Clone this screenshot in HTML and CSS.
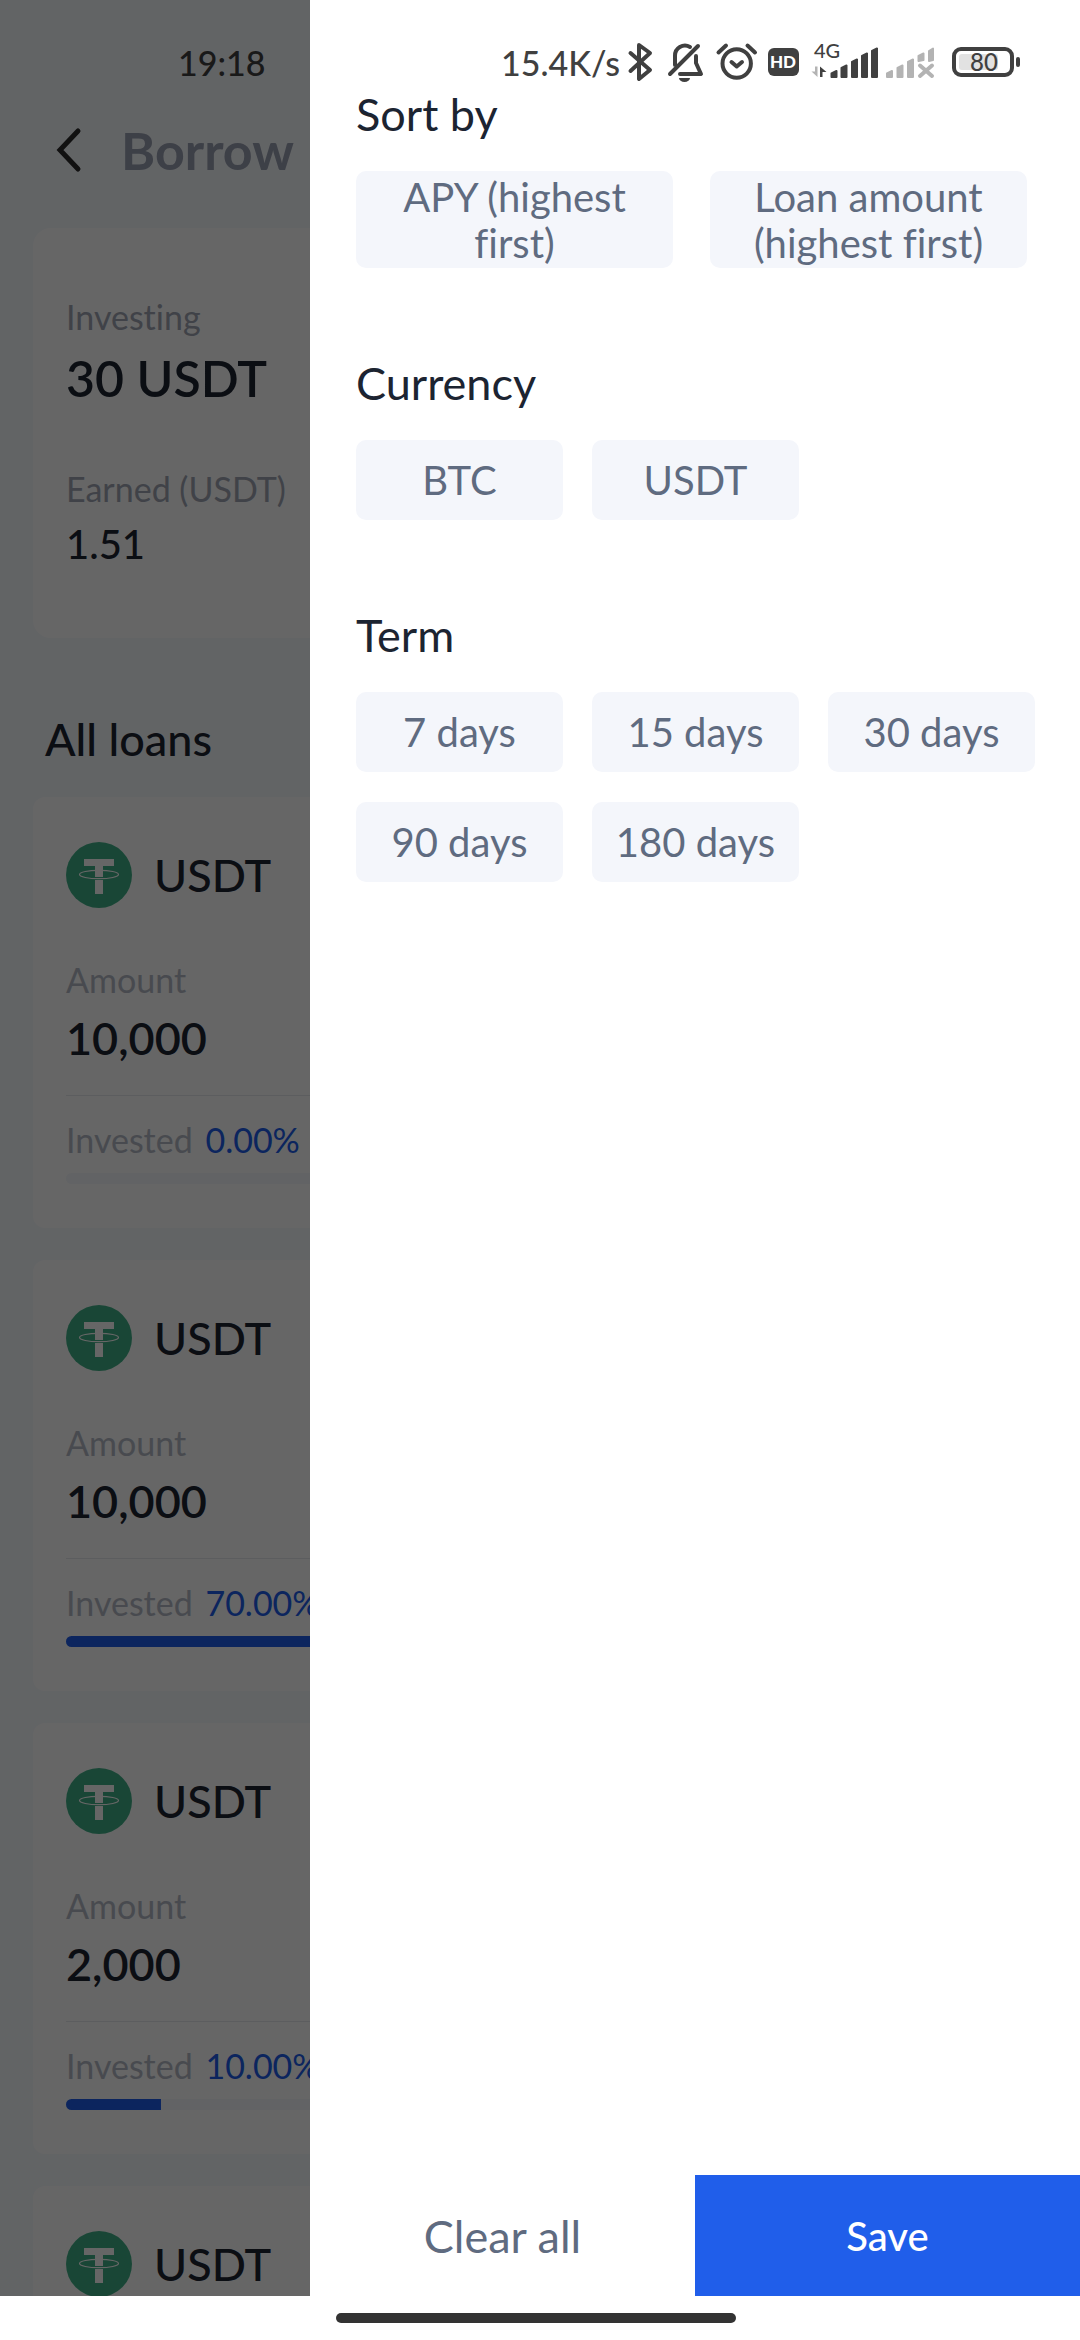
FILE: index.html
```
<!DOCTYPE html>
<html lang="en">
  <head>
    <meta charset="UTF-8" />
    <meta name="viewport" content="width=device-width, initial-scale=1.0" />
    <title>Borrow</title>
    <link rel="stylesheet" href="styles.css">
  </head>

  <body>
    <!-- shared coin logo -->
    <svg class="sprite" aria-hidden="true">
      <symbol id="tether" viewBox="0 0 66 66">
        <circle cx="33" cy="33" r="33" fill="#40b088" />
        <path d="M18 17h30v7H37v28h-8V24H18z" fill="#fff" />
        <path d="M29 36.5h8" stroke="#40b088" stroke-width="3" />
        <ellipse cx="33" cy="32.5" rx="19.5" ry="4.2" fill="none" stroke="#fff" stroke-width="1.2" />
      </symbol>
    </svg>

    <div class="app">
      <main class="page">
        <div class="status-bar status-left">19:18</div>
        <header class="header">
          <button class="back-btn" aria-label="Back">
            <svg width="26" height="44" viewBox="0 0 26 44">
              <path d="M23 3 5 22l18 19" />
            </svg>
          </button>
          <h1>Borrow</h1>
        </header>

        <section class="card summary">
          <div class="label">Investing</div>
          <div class="total">30 USDT</div>
          <div class="label earned-label">Earned (USDT)</div>
          <div class="earned">1.51</div>
        </section>

        <h2 class="list-title">All loans</h2>

        <section class="loans">
          <article class="card loan">
            <div class="coin"><svg class="coin-icon"><use href="#tether" /></svg>USDT</div>
            <div class="label light">Amount</div>
            <div class="amount">10,000</div>
            <div class="invested label light">Invested <span class="percent">0.00%</span></div>
            <div class="track"><div class="fill" style="width: 0%"></div></div>
          </article>
          <article class="card loan">
            <div class="coin"><svg class="coin-icon"><use href="#tether" /></svg>USDT</div>
            <div class="label light">Amount</div>
            <div class="amount">10,000</div>
            <div class="invested label light">Invested <span class="percent">70.00%</span></div>
            <div class="track"><div class="fill" style="width: 70%"></div></div>
          </article>
          <article class="card loan">
            <div class="coin"><svg class="coin-icon"><use href="#tether" /></svg>USDT</div>
            <div class="label light">Amount</div>
            <div class="amount">2,000</div>
            <div class="invested label light">Invested <span class="percent">10.00%</span></div>
            <div class="track"><div class="fill" style="width: 10%"></div></div>
          </article>
          <article class="card loan">
            <div class="coin"><svg class="coin-icon"><use href="#tether" /></svg>USDT</div>
          </article>
        </section>
      </main>

      <div class="overlay"></div>

      <aside class="drawer">
        <div class="status-bar status-right">
          <span>15.4K/s</span>
          <!-- bluetooth -->
          <svg width="32" height="40" viewBox="0 0 32 40">
            <path class="line" d="M2.5 11 22 28l-11 9V3l11 8L2.5 29" />
          </svg>
          <!-- muted bell -->
          <svg width="41" height="40" viewBox="0 0 41 40">
            <path class="line" d="M7 23v-9A10 10 0 0 1 22 5M2 32 30 4M28 14v7l5 11H12" />
            <path d="M11 36h11a5.5 4 0 0 1-11 0z" fill="#404040" />
          </svg>
          <!-- alarm -->
          <svg width="43" height="40" viewBox="0 0 43 40">
            <circle class="line" cx="19.7" cy="21.5" r="14.2" />
            <path class="line" d="M1.5 10.5 9 3.5M30.5 3.5l7.500 7M14.5 20l5.2 4.5L25 20" />
          </svg>
          <!-- HD -->
          <svg width="35" height="40" viewBox="0 0 35 40">
            <rect y="6" width="31" height="28" rx="6" fill="#404040" />
            <text class="hd" x="15" y="26" text-anchor="middle">HD</text>
          </svg>
          <!-- first sim -->
          <svg width="67" height="40" viewBox="0 0 67 40">
            <text class="net" x="3" y="16">4G</text>
            <path d="M4 24.5h2.5v10.5L.5 29.5H4z" fill="#b3b3b3" />
            <path d="M9 35V24.5l6.5 5.5h-4v5z" fill="#404040" />
            <path class="bars" d="M20.5 31.5l5-2.5v6h-5zM30.5 26l5-2.5V35h-5zM41 20l5-2.5V35h-5zM51 14l5-2.5V35h-5zM61 9l5-2.5V35h-5z" />
          </svg>
          <!-- second sim, no signal -->
          <svg width="58" height="40" viewBox="0 0 58 40">
            <path class="bars off" d="M1 31.5l5-2.5v6H1zM11.5 26l5-2.5V35h-5zM22 20l5-2.5V35h-5zM32.5 14l5-2.5V18l-5 1zM43 9l4-2.5V18l-4 1z" />
            <path class="cross" d="M34 23.5 46 34M46 23.5 34 34" />
          </svg>
          <!-- battery -->
          <svg width="68" height="40" viewBox="0 0 68 40">
            <rect x="2" y="7" width="58" height="26" rx="7" fill="none" stroke="#404040" stroke-width="4" />
            <rect x="7" y="12" width="39" height="16" rx="3" fill="#e2e2e2" />
            <rect x="64" y="15" width="4" height="10" rx="2" fill="#404040" />
            <text class="charge" x="32" y="29" text-anchor="middle">80</text>
          </svg>
        </div>

        <div class="filters">
          <h3>Sort by</h3>
          <div class="chips sort">
            <button class="chip">APY (highest first)</button>
            <button class="chip">Loan amount (highest first)</button>
          </div>

          <h3>Currency</h3>
          <div class="chips">
            <button class="chip">BTC</button>
            <button class="chip">USDT</button>
          </div>

          <h3>Term</h3>
          <div class="chips">
            <button class="chip">7 days</button>
            <button class="chip">15 days</button>
            <button class="chip">30 days</button>
            <button class="chip">90 days</button>
            <button class="chip">180 days</button>
          </div>
        </div>

        <div class="actions">
          <button class="clear-btn">Clear all</button>
          <button class="save-btn">Save</button>
        </div>
      </aside>
    </div>

    <div class="nav-bar"><div class="nav-handle"></div></div>
  </body>
</html>
```
FILE: styles.css
```
/* Basic reset */
* {
  margin: 0;
  padding: 0;
  box-sizing: border-box;
}

body {
  font-family: "Lato", sans-serif;
  font-variant-ligatures: none;
  background-color: #fff;
  color: #1c2431;
  height: 100vh;
  display: flex;
  flex-direction: column;
  overflow: hidden;
}

h1,
h2,
h3 {
  font-weight: 400;
}

button {
  font-family: inherit;
  font-variant-ligatures: none;
  border: none;
  background: none;
  cursor: pointer;
}

svg {
  flex-shrink: 0;
  overflow: visible;
}

.sprite {
  position: absolute;
  width: 0;
  height: 0;
}

.app {
  position: relative;
  flex: 1;
  min-height: 0;
  overflow: hidden;
}

/* Page behind the drawer */
.page {
  height: 100%;
  overflow: hidden;
  background-color: #f6f9fd;
}

.status-bar {
  height: 84px;
  padding-top: 40px;
  display: flex;
  align-items: center;
  font-size: 34px;
  font-weight: 500;
  color: #404040;
}

.status-left {
  padding-left: 178px;
}

.header {
  height: 132px;
  padding-left: 55px;
  display: flex;
  align-items: center;
  gap: 40px;
}

.header h1 {
  font-size: 52px;
  font-weight: 700;
  color: #99a0b1;
}

.back-btn {
  display: flex;
}

.back-btn path {
  fill: none;
  stroke: #2b2b2b;
  stroke-width: 5;
  stroke-linecap: round;
}

.card {
  margin: 0 33px;
  padding: 0 33px;
  background-color: #fff;
  border-radius: 12px;
}

.summary {
  margin-top: 12px;
  padding-top: 69px;
  padding-bottom: 69px;
  border-radius: 18px;
}

.label {
  font-size: 34px;
  line-height: 40px;
  color: #a0a6b3;
}

.light {
  color: #b4bac6;
}

.total {
  margin-top: 10px;
  font-size: 50px;
  line-height: 62px;
  font-weight: 600;
}

.earned-label {
  margin-top: 60px;
}

.earned {
  margin-top: 10px;
  font-size: 40px;
  line-height: 50px;
  font-weight: 500;
}

.list-title {
  margin: 73px 45px 30px;
  font-size: 45px;
  line-height: 56px;
  font-weight: 500;
}

.loans {
  display: flex;
  flex-direction: column;
  gap: 32px;
}

.loan {
  padding-top: 45px;
  padding-bottom: 44px;
}

.coin {
  display: flex;
  align-items: center;
  gap: 22px;
  margin-bottom: 52px;
  font-size: 45px;
  font-weight: 500;
}

.coin-icon {
  width: 66px;
  height: 66px;
}

.amount {
  margin-top: 10px;
  padding-bottom: 29px;
  border-bottom: 1px solid #e6e9ee;
  font-size: 45px;
  line-height: 56px;
  font-weight: 600;
}

.invested {
  margin-top: 24px;
}

.percent {
  margin-left: 4px;
  color: #205eea;
}

.track {
  height: 11px;
  margin-top: 13px;
  border-radius: 6px;
  background-color: #f5f8fc;
  overflow: hidden;
}

.fill {
  height: 100%;
  background-color: #205eea;
}

.overlay {
  position: absolute;
  inset: 0;
  background-color: rgba(0, 0, 0, 0.6);
}

/* Filter drawer */
.drawer {
  position: absolute;
  top: 0;
  right: 0;
  bottom: 0;
  width: 71.3%;
  display: flex;
  flex-direction: column;
  background-color: #fff;
}

.status-right {
  justify-content: flex-end;
  gap: 8px;
  padding-right: 60px;
}

.line {
  fill: none;
  stroke: #404040;
  stroke-width: 4;
  stroke-linecap: round;
  stroke-linejoin: round;
}

.bars {
  fill: #404040;
  stroke: #404040;
  stroke-width: 2;
  stroke-linejoin: round;
}

.off {
  fill: #b3b3b3;
  stroke: #b3b3b3;
}

.cross {
  stroke: #b3b3b3;
  stroke-width: 4;
  stroke-linecap: round;
}

.hd {
  font-size: 17px;
  font-weight: 900;
  fill: #fff;
}

.net {
  font-size: 20px;
  fill: #404040;
}

.charge {
  font-size: 24px;
  fill: #404040;
}

.filters {
  flex: 1;
  padding: 2px 45px 0 46px;
}

.filters h3 {
  margin-bottom: 29px;
  font-size: 45px;
  line-height: 56px;
}

.chips {
  display: grid;
  grid-template-columns: repeat(3, 1fr);
  gap: 30px 29px;
  margin-bottom: 87px;
}

.sort {
  grid-template-columns: repeat(2, 1fr);
  column-gap: 37px;
  padding-right: 8px;
}

.chip {
  min-height: 80px;
  border-radius: 10px;
  background-color: #f4f6fb;
  color: #5f6b80;
  font-size: 40px;
  line-height: 46px;
}

.sort .chip {
  min-height: 97px;
  padding: 0 32px;
}

.actions {
  display: flex;
  height: 121px;
}

.clear-btn,
.save-btn {
  flex: 1;
}

.clear-btn {
  font-size: 45px;
  color: #5f6b80;
}

.save-btn {
  font-size: 40px;
  font-weight: 500;
  color: #fff;
  background-color: #205eea;
}

/* System gesture bar */
.nav-bar {
  height: 44px;
  display: flex;
  align-items: center;
  justify-content: center;
}

.nav-handle {
  width: 37%;
  height: 10px;
  margin-right: 8px;
  border-radius: 5px;
  background-color: #333;
}
```
